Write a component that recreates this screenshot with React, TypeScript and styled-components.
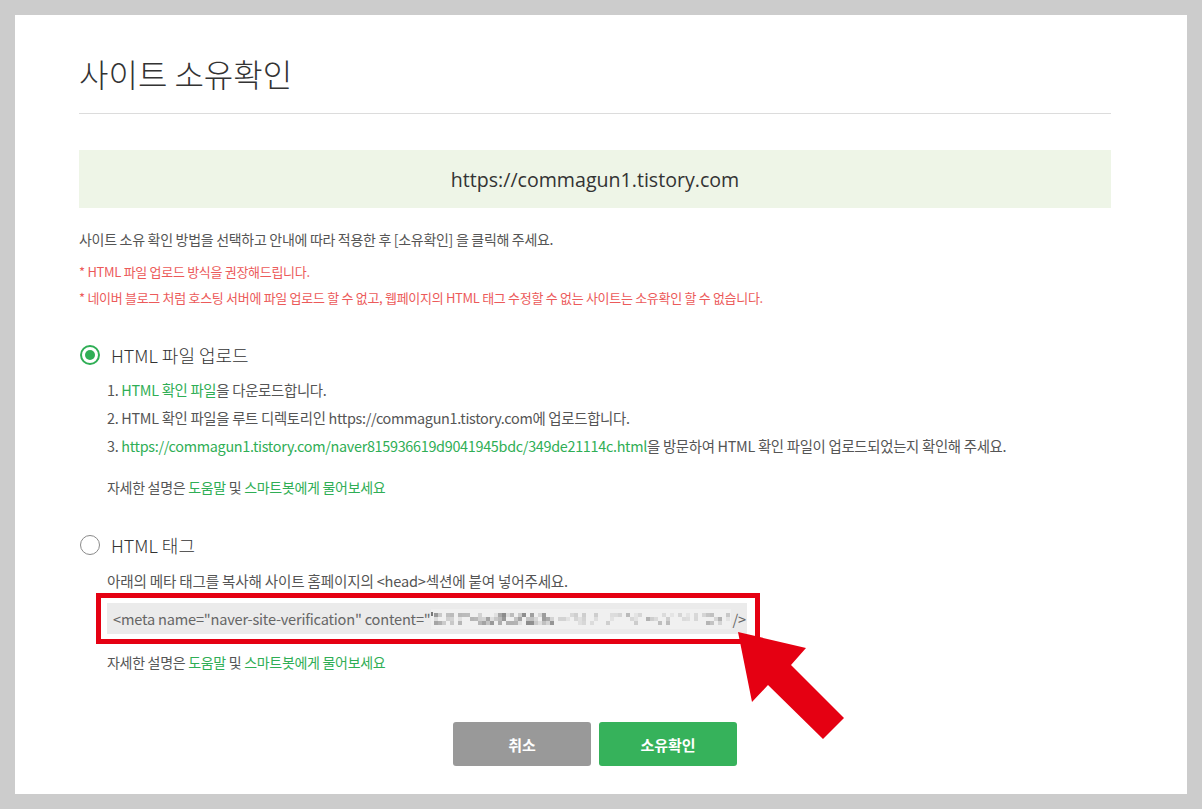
import React from 'react';
import styled, { createGlobalStyle } from 'styled-components';

const GREEN = '#2fae55';

const GlobalStyle = createGlobalStyle`
  html, body {
    margin: 0;
    padding: 0;
    background: #cccccc;
  }
  body {
    font-family: "Noto Sans CJK KR", "Noto Sans", sans-serif;
    color: #555;
  }
`;

const Page = styled.div`
  padding: 15px;
  height: 809px;
  box-sizing: border-box;
`;

const Panel = styled.div`
  background: #fff;
  height: 779px;
  box-sizing: border-box;
  padding: 36px 76px 0 64px;
`;

const Title = styled.h1`
  margin: 0;
  font-size: 32px;
  line-height: 44px;
  font-weight: 300;
  color: #333;
  padding-bottom: 18px;
  border-bottom: 1px solid #dcdcdc;
`;

const SiteBox = styled.div`
  margin-top: 36px;
  height: 58px;
  background: #eef5e7;
  display: flex;
  align-items: center;
  justify-content: center;
  font-family: "Open Sans", "Noto Sans", sans-serif;
  font-size: 19.6px;
  color: #333;
`;

const Guide = styled.p`
  margin: 20px 0 0;
  font-size: 14px;
  line-height: 22px;
  color: #555;
  letter-spacing: -0.3px;
`;

const Notes = styled.ul`
  list-style: none;
  margin: 9px 0 0;
  padding: 0;
`;

const Note = styled.li`
  font-size: 13px;
  line-height: 26px;
  color: #ec5a5a;
  letter-spacing: -0.3px;
`;

const Method = styled.section<{ $gap: number }>`
  margin-top: ${p => p.$gap}px;
`;

const MethodHead = styled.label`
  display: flex;
  align-items: center;
  gap: 11px;
  font-size: 18px;
  line-height: 26px;
  color: #333;
  font-weight: 300;
`;

const Radio = styled.span<{ $checked?: boolean }>`
  width: 20px;
  height: 20px;
  box-sizing: border-box;
  border-radius: 50%;
  border-style: solid;
  border-color: ${p => (p.$checked ? GREEN : '#8a8a8a')};
  border-width: ${p => (p.$checked ? '2px' : '1.5px')};
  display: flex;
  align-items: center;
  justify-content: center;
  margin-left: 1px;

  &::after {
    content: "";
    display: ${p => (p.$checked ? 'block' : 'none')};
    width: 10px;
    height: 10px;
    border-radius: 50%;
    background: ${GREEN};
  }
`;

const MethodBody = styled.div`
  padding-left: 28px;
`;

const Steps = styled.ol`
  list-style: none;
  margin: 8px 0 0;
  padding: 0;
`;

const Step = styled.li`
  font-size: 14.4px;
  line-height: 28px;
  color: #555;
  letter-spacing: -0.3px;
`;

const Link = styled.span`
  color: ${GREEN};
`;

const Help = styled.p<{ $top: number }>`
  margin: ${p => p.$top}px 0 0;
  font-size: 14px;
  line-height: 22px;
  color: #555;
  letter-spacing: -0.3px;
`;

const Desc = styled.p`
  margin: 12px 0 0;
  font-size: 14.6px;
  line-height: 22px;
  color: #555;
  letter-spacing: -0.2px;
`;

const Highlight = styled.div`
  position: relative;
  margin: 1px 0 0 -11px;
  width: 664px;
  box-sizing: border-box;
  border: 5px solid #e50012;
  padding: 5px 8px 5px 6px;
`;

const MetaField = styled.div`
  height: 31px;
  background: #ebebeb;
  display: flex;
  align-items: center;
  padding-left: 6px;
  font-size: 14.6px;
  color: #666;
  letter-spacing: -0.2px;
  white-space: nowrap;
  overflow: hidden;
`;

const Mosaic = styled.svg`
  margin: 0 2px 0 0;
  flex: none;
`;

const Arrow = styled.svg`
  position: absolute;
  left: 630px;
  top: 28px;
  overflow: visible;
`;

const Actions = styled.div`
  display: flex;
  justify-content: center;
  gap: 8px;
  margin-top: 49px;
`;

const Button = styled.button<{ $primary?: boolean }>`
  width: 138px;
  height: 44px;
  border: 0;
  border-radius: 3px;
  background: ${p => (p.$primary ? '#36b25b' : '#999999')};
  color: #fff;
  font-family: inherit;
  font-size: 15px;
  font-weight: 700;
  cursor: pointer;
`;

// blurred verification code: a pixelated strip of grey cells
const CELL = 4;
const COLS = 74;
const ROWS = 3;
const MOSAIC_W = COLS * CELL + 4;

const darknessAt = (col: number) => {
  if (col < 4) return 0.55;
  if (col < 10) return 0.35;
  if (col < 30) return 0.6;
  if (col < 46) return 0.15;
  if (col < 60) return 0.35;
  if (col < 68) return 0.12;
  return 0.35;
};

const cells: { x: number; y: number; c: string }[] = (() => {
  let seed = 11;
  const rand = () => {
    seed = (seed * 9301 + 49297) % 233280;
    return seed / 233280;
  };
  const out: { x: number; y: number; c: string }[] = [];
  for (let col = 0; col < COLS; col++) {
    const d = darknessAt(col);
    for (let row = 0; row < ROWS; row++) {
      if (rand() > d + 0.1) continue;
      const shade = Math.round(228 - rand() * 150 * d);
      out.push({ x: 3 + col * CELL, y: 4 + row * CELL, c: `rgb(${shade},${shade},${shade})` });
    }
  }
  return out;
})();

const MetaMosaic = () => (
  <Mosaic width={MOSAIC_W} height="20" viewBox={`0 0 ${MOSAIC_W} 20`}>
    <rect x="0" y="0" width={MOSAIC_W} height="20" fill="#f0f0f0" />
    <rect x="0" y="3" width="2" height="4" fill="#777" />
    {cells.map((cell, i) => (
      <rect key={i} x={cell.x} y={cell.y} width={CELL} height={CELL} fill={cell.c} />
    ))}
  </Mosaic>
);

export default function App() {
  return (
    <>
      <GlobalStyle />
      <Page>
        <Panel>
          <Title>사이트 소유확인</Title>
          <SiteBox>https://commagun1.tistory.com</SiteBox>
          <Guide>사이트 소유 확인 방법을 선택하고 안내에 따라 적용한 후 [소유확인] 을 클릭해 주세요.</Guide>
          <Notes>
            <Note>* HTML 파일 업로드 방식을 권장해드립니다.</Note>
            <Note>* 네이버 블로그 처럼 호스팅 서버에 파일 업로드 할 수 없고, 웹페이지의 HTML 태그 수정할 수 없는 사이트는 소유확인 할 수 없습니다.</Note>
          </Notes>

          <Method $gap={31}>
            <MethodHead>
              <Radio $checked />
              HTML 파일 업로드
            </MethodHead>
            <MethodBody>
              <Steps>
                <Step>1. <Link>HTML 확인 파일</Link>을 다운로드합니다.</Step>
                <Step>2. HTML 확인 파일을 루트 디렉토리인 https://commagun1.tistory.com에 업로드합니다.</Step>
                <Step>
                  3. <Link>https://commagun1.tistory.com/naver815936619d9041945bdc/349de21114c.html</Link>을 방문하여 HTML 확인 파일이 업로드되었는지 확인해 주세요.
                </Step>
              </Steps>
              <Help $top={16}>
                자세한 설명은 <Link>도움말</Link> 및 <Link>스마트봇에게 물어보세요</Link>
              </Help>
            </MethodBody>
          </Method>

          <Method $gap={34}>
            <MethodHead>
              <Radio />
              HTML 태그
            </MethodHead>
            <MethodBody>
              <Desc>아래의 메타 태그를 복사해 사이트 홈페이지의 &lt;head&gt;섹션에 붙여 넣어주세요.</Desc>
              <Highlight>
                <MetaField>
                  &lt;meta name="naver-site-verification" content="
                  <MetaMosaic />
                  /&gt;
                </MetaField>
                <Arrow width="120" height="120" viewBox="0 0 120 120">
                  <polygon
                    points="7,6 75,22 60,39 113,92 92,113 37,59 21,76"
                    fill="#e50012"
                  />
                </Arrow>
              </Highlight>
              <Help $top={7}>
                자세한 설명은 <Link>도움말</Link> 및 <Link>스마트봇에게 물어보세요</Link>
              </Help>
            </MethodBody>
          </Method>

          <Actions>
            <Button>취소</Button>
            <Button $primary>소유확인</Button>
          </Actions>
        </Panel>
      </Page>
    </>
  );
}
